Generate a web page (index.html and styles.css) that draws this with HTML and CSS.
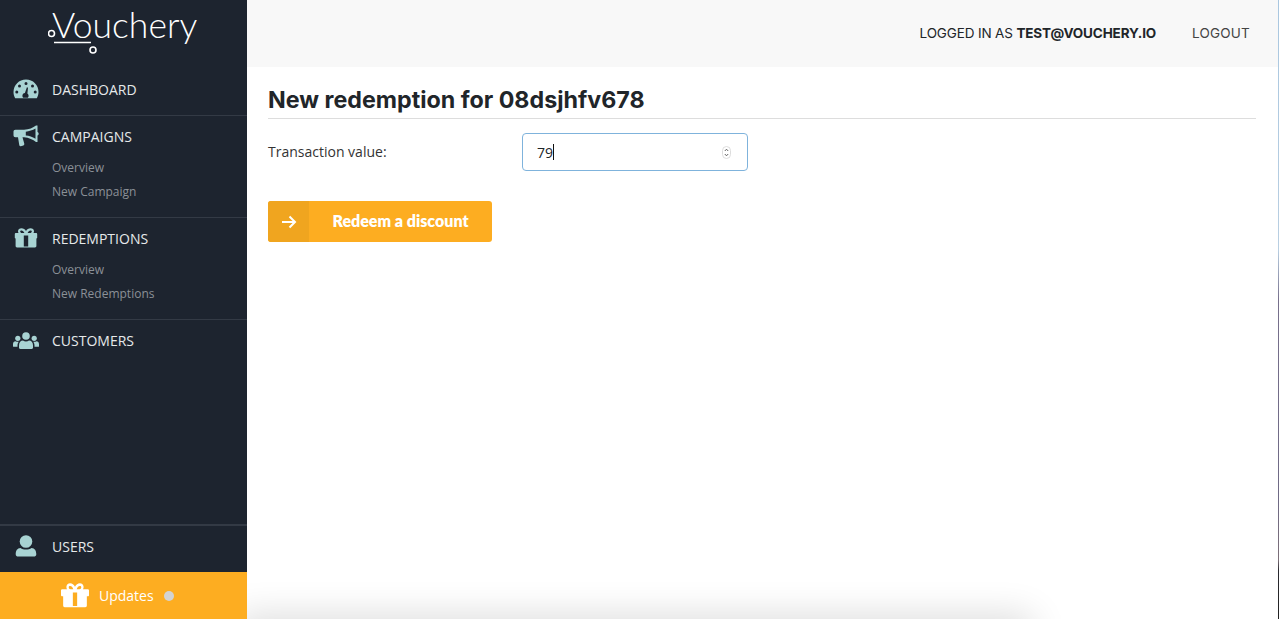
FILE: index.html
```html
<!DOCTYPE html>
<html lang="en">
<head>
    <meta charset="UTF-8">
    <meta name="viewport" content="width=device-width, initial-scale=1.0">
    <title>New redemption - Vouchery</title>
    <link rel="stylesheet" href="styles.css">
</head>
<body>
    <div class="sidebar">
        <div class="logo">
            <span class="logo-text">Vouchery</span>
            <svg class="logo-mark" width="150" height="56" viewBox="0 0 150 56">
                <circle cx="3.500" cy="33.500" r="3" fill="none" stroke="#fff" stroke-width="1.600"/>
                <path d="M6 42.500H43" stroke="#fff" stroke-width="1.600" fill="none"/>
                <circle cx="45" cy="50" r="3" fill="none" stroke="#fff" stroke-width="1.600"/>
            </svg>
        </div>

        <div class="nav-group nav-dashboard">
            <a class="nav-item nav-item-tall">
                <svg class="nav-icon" width="26" height="20" viewBox="0 0 26 20">
                    <path fill-rule="evenodd" d="M13 0.500C6 0.500 0.500 6 0.500 13c0 2.400 0.600 4.500 1.700 6.200h21.600c1.100-1.700 1.700-3.800 1.700-6.200C25.500 6 20 0.500 13 0.500zM13 3a1.500 1.500 0 1 1 0 3 1.500 1.500 0 0 1 0-3zM6.500 5.500a1.500 1.500 0 1 1 0 3 1.500 1.500 0 0 1 0-3zM19.500 5.500a1.500 1.500 0 1 1 0 3 1.500 1.500 0 0 1 0-3zM3.800 11.500a1.500 1.500 0 1 1 0 3 1.500 1.500 0 0 1 0-3zM22.200 11.500a1.500 1.500 0 1 1 0 3 1.500 1.500 0 0 1 0-3zM14 8l1 1-.6 5.500c.8.500 1.200 1.300 1.200 2.200 0 .9-.3 1.500-.8 2H10.200c-.5-.5-.8-1.100-.8-2 0-1.500 1.100-2.600 2.500-2.700z"/>
                </svg>
                <span>DASHBOARD</span>
            </a>
        </div>

        <div class="nav-group nav-campaigns">
            <a class="nav-item">
                <svg class="nav-icon" width="26" height="22" viewBox="0 0 26 22">
                    <path fill-rule="evenodd" d="M23 0.500h1.500V7c.8.300 1.200 1 1.200 1.800s-.4 1.500-1.200 1.800v6.400H23C20 14.800 16 12.600 11 12.300H9.500l1.800 6.500c.2.800-.3 1.500-1 1.700l-2.400.7c-.7.200-1.400-.2-1.600-.9L5 12.300H2.500C1.200 12.300.5 11.500.5 10.300V6.800C.5 5.600 1.200 4.800 2.500 4.800H11C16 4.500 20 2.800 23 0.500zM22.500 3.600C19.500 5.300 16 6.400 12.800 6.700v3.900C16 10.900 19.500 12 22.500 13.800z"/>
                </svg>
                <span>CAMPAIGNS</span>
            </a>
            <a class="sub-item">Overview</a>
            <a class="sub-item">New Campaign</a>
        </div>

        <div class="nav-group nav-redemptions">
            <a class="nav-item">
                <svg class="nav-icon" width="26" height="20" viewBox="0 0 26 20">
                    <path fill-rule="evenodd" d="M8.500 0.200c1.900 0 3.500 1 4.500 2.800 1-1.800 2.600-2.800 4.500-2.800 2 0 3.500 1.200 3.500 3 0 .7-.2 1.300-.6 1.800H23c.7 0 1.200.5 1.200 1.200v3.500c0 .5-.4.800-.8.800v7.500c0 .8-.6 1.400-1.400 1.400H4c-.8 0-1.400-.6-1.400-1.400v-7.500c-.5 0-.8-.3-.8-.8V6.200C1.800 5.500 2.300 5 3 5h2.600C5.200 4.500 5 3.900 5 3.200c0-1.800 1.500-3 3.500-3zM8.500 2.400c-.8 0-1.300.4-1.300 1 0 .8.700 1.600 1.800 1.600h2.400C10.700 3.300 9.700 2.400 8.500 2.400zM17.500 2.400c-1.200 0-2.200.9-2.900 2.600H17c1.100 0 1.800-.8 1.800-1.600 0-.6-.5-1-1.300-1zM10.800 7.600v10.800h4.400V7.600z"/>
                </svg>
                <span>REDEMPTIONS</span>
            </a>
            <a class="sub-item">Overview</a>
            <a class="sub-item">New Redemptions</a>
        </div>

        <div class="nav-group nav-customers">
            <a class="nav-item">
                <svg class="nav-icon" width="26" height="17" viewBox="0 0 26 17">
                    <circle cx="13" cy="4" r="3.800"/>
                    <circle cx="4.800" cy="6.300" r="2.600"/>
                    <circle cx="21.200" cy="6.300" r="2.600"/>
                    <path d="M7.300 17c-.8 0-1.300-.5-1.300-1.200v-2.500c0-3 1.800-4.800 4-4.800.8.500 1.900.9 3 .9s2.200-.4 3-.9c2.200 0 4 1.800 4 4.800v2.500c0 .7-.5 1.200-1.300 1.200z"/>
                    <path d="M0 14.500v-2.300c0-1.800 1-3 2.500-3 .7.400 1.400.6 2.400.6.300 0 .6 0 .9-.1-.9 1-1.300 2.300-1.300 3.900v1.100H1c-.6 0-1-.1-1-.2z"/>
                    <path d="M26 14.500v-2.300c0-1.800-1-3-2.500-3-.7.400-1.400.6-2.400.6-.3 0-.6 0-.9-.1.900 1 1.300 2.300 1.300 3.900v1.100H25c.6 0 1-.1 1-.2z"/>
                </svg>
                <span>CUSTOMERS</span>
            </a>
        </div>

        <div class="nav-group nav-users">
            <a class="nav-item">
                <svg class="nav-icon" width="26" height="22" viewBox="0 0 26 22">
                    <circle cx="13" cy="6.500" r="6.300"/>
                    <path d="M5.500 21.500c-1.800 0-2.800-.8-2.800-2.300 0-3.500 1.500-6 4.800-6.200 1.500 1 3.400 1.500 5.500 1.500s4-.5 5.500-1.500c3.300.2 4.800 2.700 4.800 6.200 0 1.500-1 2.300-2.800 2.300z"/>
                </svg>
                <span>USERS</span>
            </a>
        </div>

        <div class="updates">
            <svg class="updates-icon" width="28" height="25" viewBox="0 0 26 20" preserveAspectRatio="none">
                <path fill-rule="evenodd" d="M8.500 0.200c1.900 0 3.500 1 4.500 2.800 1-1.800 2.600-2.800 4.500-2.800 2 0 3.500 1.200 3.500 3 0 .7-.2 1.300-.6 1.800H25c.5 0 1 .5 1 1v3.700c0 .5-.4.800-.8.800H24v7.500c0 .8-.6 1.400-1.400 1.400H3.400c-.8 0-1.400-.6-1.400-1.400v-7.500H.8c-.4 0-.8-.3-.8-.8V6C0 5.500.5 5 1 5h4.600C5.200 4.500 5 3.900 5 3.200c0-1.800 1.500-3 3.500-3zM8.500 2.400c-.8 0-1.300.4-1.300 1 0 .8.700 1.600 1.800 1.600h2.400C10.700 3.300 9.700 2.400 8.500 2.400zM17.500 2.400c-1.200 0-2.200.9-2.900 2.600H17c1.100 0 1.800-.8 1.800-1.600 0-.6-.5-1-1.300-1zM11 7.600v10.800h4V7.600z"/>
            </svg>
            <span>Updates</span>
            <i class="updates-dot"></i>
        </div>
    </div>

    <div class="content">
        <div class="topbar">
            <span class="logged-in">LOGGED IN AS <b>TEST@VOUCHERY.IO</b></span>
            <a class="logout">LOGOUT</a>
        </div>

        <div class="page">
            <h1>New redemption for 08dsjhfv678</h1>

            <div class="form-row">
                <label for="value">Transaction value:</label>
                <div class="field">
                    <input id="value" type="text" value="79">
                    <svg class="spinner" width="9" height="13" viewBox="0 0 9 13">
                        <rect x="0.500" y="0.500" width="8" height="12" rx="4" fill="#fff" stroke="#ddd"/>
                        <path d="M2.800 5 4.500 3.200 6.200 5M2.800 8 4.500 9.800 6.200 8" fill="none" stroke="#555" stroke-width="0.900"/>
                    </svg>
                </div>
            </div>

            <button class="redeem">
                <span class="redeem-arrow">
                    <svg width="16" height="14" viewBox="0 0 16 14">
                        <path d="M1 7h13M8.500 1.500 14 7l-5.500 5.500" fill="none" stroke="#fff" stroke-width="2"/>
                    </svg>
                </span>
                <span class="redeem-label">Redeem a discount</span>
            </button>
        </div>
    </div>

    <div class="bottom-shadow"></div>
    <div class="window-edge"></div>
</body>
</html>
```

FILE: styles.css
```css
html, body {
    height: 100%;
}

body {
    margin: 0;
    display: flex;
    height: 619px;
    overflow: hidden;
    font-family: "Open Sans", sans-serif;
    background-color: #fff;
    color: #212529;
}

a {
    display: block;
}

/* sidebar */
.sidebar {
    position: relative;
    z-index: 1;
    width: 247px;
    flex: none;
    display: flex;
    flex-direction: column;
    background-color: #1d242f;
}

.logo {
    position: relative;
    height: 66px;
}

.logo-text {
    position: absolute;
    left: 52px;
    top: 3px;
    font-family: "Lato", sans-serif;
    font-size: 35.5px;
    font-weight: 300;
    line-height: 44px;
    color: #fff;
}

.logo-mark {
    position: absolute;
    left: 48px;
    top: 0;
}

.nav-group {
    border-bottom: 1px solid #333a45;
}

.nav-dashboard {
    height: 49px;
}

.nav-campaigns {
    height: 101px;
}

.nav-redemptions {
    height: 101px;
}

.nav-customers {
    height: 204px;
}

.nav-users {
    height: 46px;
    border-bottom: 0;
    border-top: 1px solid #333a45;
}

.nav-item {
    display: flex;
    align-items: center;
    height: 40px;
    padding-left: 13px;
    font-size: 14px;
    color: #e6e9ea;
}

.nav-item-tall {
    height: 46px;
}

.nav-item span {
    margin-left: 13px;
}

.nav-icon {
    flex: none;
    fill: #a8d3d3;
}

.sub-item {
    padding-left: 52px;
    font-size: 12px;
    line-height: 24px;
    color: #8b9097;
}

.updates {
    flex: 1;
    display: flex;
    align-items: center;
    padding-left: 61px;
    background-color: #fdad21;
    font-size: 14px;
    color: #fff;
}

.updates-icon {
    fill: #fff;
}

.updates span {
    margin-left: 10px;
}

.updates-dot {
    width: 10px;
    height: 10px;
    margin-left: 10px;
    border-radius: 50%;
    background-color: #d3d3d3;
}

/* right side */
.content {
    flex: 1;
    min-width: 0;
}

.topbar {
    display: flex;
    justify-content: flex-end;
    align-items: center;
    gap: 36px;
    box-sizing: border-box;
    height: 67px;
    padding: 0 29px 2px 0;
    background-color: #f8f8f8;
    font-family: "Inter", sans-serif;
    font-size: 13.5px;
    letter-spacing: -0.15px;
    color: #212529;
}

.logout {
    letter-spacing: 0.2px;
    color: #444;
}

.page {
    padding: 0 23px 0 21px;
}

h1 {
    margin: 0;
    padding: 17px 0 2px;
    border-bottom: 1px solid #ddd;
    font-family: "Inter", sans-serif;
    font-size: 23.25px;
    font-weight: 700;
    line-height: 32px;
    color: #212529;
}

.form-row {
    display: flex;
    align-items: center;
    margin-top: 14px;
}

.form-row label {
    width: 254px;
    padding-bottom: 2px;
    font-size: 14px;
    color: #333;
}

.field {
    display: flex;
    align-items: center;
    box-sizing: border-box;
    width: 226px;
    height: 38px;
    padding: 0 16px 0 14px;
    border: 1px solid #7fb3dc;
    border-radius: 4px;
    background-color: #fff;
}

.field input {
    width: 16px;
    height: 16px;
    padding: 0;
    border: 0;
    border-right: 1px solid #111;
    outline: none;
    font-family: "Open Sans", sans-serif;
    font-size: 14px;
    color: #212529;
}

.spinner {
    margin-left: auto;
}

.redeem {
    display: flex;
    align-items: stretch;
    width: 224px;
    height: 41px;
    margin-top: 30px;
    padding: 0;
    overflow: hidden;
    border: none;
    border-radius: 3px;
    background-color: #fdad21;
    font-family: "Lato", sans-serif;
    font-size: 16px;
    font-weight: 800;
    color: #fff;
}

.redeem-arrow {
    display: flex;
    align-items: center;
    justify-content: center;
    width: 41px;
    background-color: #f0a51f;
}

.redeem-label {
    flex: 1;
    align-self: center;
    text-align: center;
    padding-bottom: 2px;
}

/* overlays */
.bottom-shadow {
    position: absolute;
    left: 247px;
    top: 625px;
    width: 775px;
    height: 20px;
    box-shadow: 0 0 36px 10px rgba(0, 0, 0, 0.14);
}

.window-edge {
    position: absolute;
    right: 0;
    top: 0;
    width: 1px;
    height: 619px;
    background: linear-gradient(#a9c7e0 0, #b9cfe2 250px, #77708c 300px, #6f6a85 500px, #7c6f78 560px, #2a2a30 570px, #222 619px);
}
```
